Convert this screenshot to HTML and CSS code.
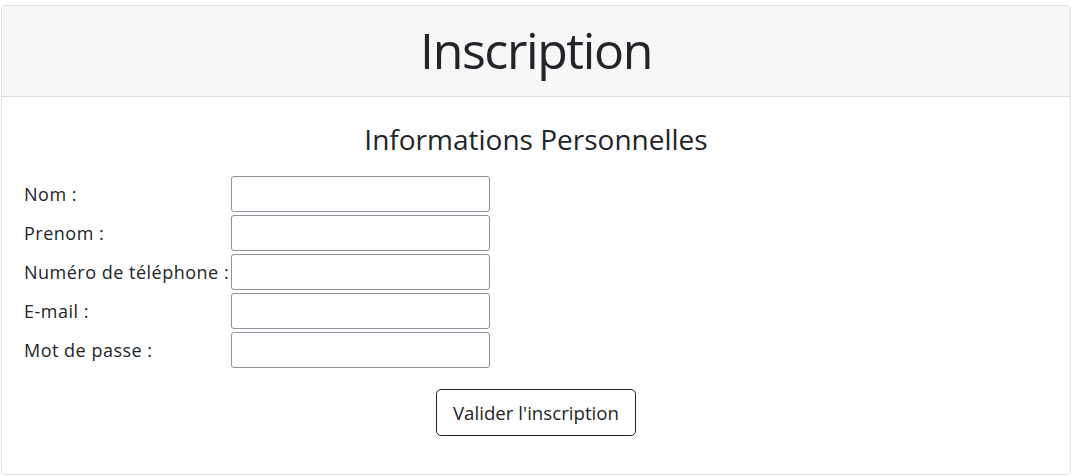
FILE: index.html
```html
<!DOCTYPE html>
<html lang="fr">
<head>
<meta charset="utf-8">
<title>Inscription</title>
<link rel="stylesheet" href="styles.css">
</head>
<body>
<div class="card">
  <div class="card-header">
    <h1 class="title">Inscription</h1>
  </div>
  <div class="card-body">
    <h3 class="subtitle">Informations Personnelles</h3>
    <form class="form">
      <div class="fields">
        <label class="label" for="nom">Nom :</label>
        <input class="input" id="nom" type="text">
        <label class="label" for="prenom">Prenom :</label>
        <input class="input" id="prenom" type="text">
        <label class="label" for="tel">Numéro de téléphone :</label>
        <input class="input" id="tel" type="text">
        <label class="label" for="mail">E-mail :</label>
        <input class="input" id="mail" type="text">
        <label class="label" for="mdp">Mot de passe :</label>
        <input class="input" id="mdp" type="password">
      </div>
      <div class="actions">
        <button class="btn" type="button">Valider l'inscription</button>
      </div>
    </form>
  </div>
</div>
</body>
</html>
```

FILE: styles.css
```css
html, body {
  margin: 0;
  padding: 0;
  background: #fff;
}
body {
  padding: 5px 1px 0 1px;
  font-family: "Open Sans", "Noto Sans", sans-serif;
  color: #212529;
  font-size: 16px;
}
.card {
  width: 1070px;
  box-sizing: border-box;
  border: 1px solid #dfdfdf;
  border-radius: 4px;
  height: 470px;
  overflow: hidden;
}
.card-header {
  background: #f7f7f7;
  border-bottom: 1px solid #dfdfdf;
  height: 90px;
  display: flex;
  align-items: center;
  justify-content: center;
}
.title {
  margin: 0;
  font-size: 50px;
  font-weight: 400;
  letter-spacing: -1.4px;
  line-height: 1.2;
  padding-bottom: 2px;
}
.card-body {
  padding: 20px 20px;
}
.subtitle {
  margin: 0;
  text-align: center;
  font-size: 28px;
  font-weight: 400;
  line-height: 1.2;
  padding-top: 6px;
}
.form {
  margin-top: 19px;
}
.fields {
  display: grid;
  grid-template-columns: 207px 259px;
  row-gap: 3px;
  padding-left: 2px;
  align-items: center;
}
.label {
  white-space: nowrap;
  font-size: 18px;
  letter-spacing: 0.5px;
}
.input {
  box-sizing: border-box;
  width: 259px;
  height: 36px;
  margin: 0;
  border: 1px solid #8f8f9d;
  border-radius: 3px;
  background: #fff;
}
.actions {
  display: flex;
  justify-content: center;
  margin-top: 21px;
}
.btn {
  font-family: inherit;
  font-size: 18.7px;
  color: #212529;
  background: #fff;
  border: 1px solid #212529;
  border-radius: 5px;
  width: 200px;
  height: 47px;
  padding: 0;
}
```
